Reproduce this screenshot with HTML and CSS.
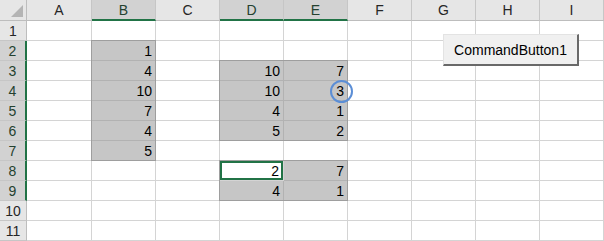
FILE: index.html
```html
<!DOCTYPE html>
<html lang="en">
<head>
    <meta charset="UTF-8">
    <title>Sheet1</title>
    <link rel="stylesheet" href="styles.css">
</head>
<body>
    <div class="sheet">
        <div class="grid">
            <!-- column headers -->
            <div class="corner">
                <svg width="12" height="12" viewBox="0 0 12 12"><polygon points="12,0 12,12 0,12" fill="#b4b4b4"/></svg>
            </div>
            <div class="hd">A</div>
            <div class="hd sel">B</div>
            <div class="hd">C</div>
            <div class="hd sel">D</div>
            <div class="hd sel">E</div>
            <div class="hd">F</div>
            <div class="hd">G</div>
            <div class="hd">H</div>
            <div class="hd">I</div>

            <!-- row 1 -->
            <div class="rh">1</div>
            <div class="c"></div><div class="c"></div><div class="c"></div><div class="c"></div><div class="c"></div><div class="c"></div><div class="c"></div><div class="c"></div><div class="c"></div>

            <!-- row 2 -->
            <div class="rh sel">2</div>
            <div class="c"></div><div class="c s">1</div><div class="c"></div><div class="c"></div><div class="c"></div><div class="c"></div><div class="c"></div><div class="c"></div><div class="c"></div>

            <!-- row 3 -->
            <div class="rh sel">3</div>
            <div class="c"></div><div class="c s">4</div><div class="c"></div><div class="c s">10</div><div class="c s">7</div><div class="c"></div><div class="c"></div><div class="c"></div><div class="c"></div>

            <!-- row 4 -->
            <div class="rh sel">4</div>
            <div class="c"></div><div class="c s">10</div><div class="c"></div><div class="c s">10</div><div class="c s">3</div><div class="c"></div><div class="c"></div><div class="c"></div><div class="c"></div>

            <!-- row 5 -->
            <div class="rh sel">5</div>
            <div class="c"></div><div class="c s">7</div><div class="c"></div><div class="c s">4</div><div class="c s">1</div><div class="c"></div><div class="c"></div><div class="c"></div><div class="c"></div>

            <!-- row 6 -->
            <div class="rh sel">6</div>
            <div class="c"></div><div class="c s">4</div><div class="c"></div><div class="c s">5</div><div class="c s">2</div><div class="c"></div><div class="c"></div><div class="c"></div><div class="c"></div>

            <!-- row 7 -->
            <div class="rh sel">7</div>
            <div class="c"></div><div class="c s">5</div><div class="c"></div><div class="c"></div><div class="c"></div><div class="c"></div><div class="c"></div><div class="c"></div><div class="c"></div>

            <!-- row 8 -->
            <div class="rh sel">8</div>
            <div class="c"></div><div class="c"></div><div class="c"></div><div class="c active">2</div><div class="c s">7</div><div class="c"></div><div class="c"></div><div class="c"></div><div class="c"></div>

            <!-- row 9 -->
            <div class="rh sel">9</div>
            <div class="c"></div><div class="c"></div><div class="c"></div><div class="c s">4</div><div class="c s">1</div><div class="c"></div><div class="c"></div><div class="c"></div><div class="c"></div>

            <!-- row 10 -->
            <div class="rh">10</div>
            <div class="c"></div><div class="c"></div><div class="c"></div><div class="c"></div><div class="c"></div><div class="c"></div><div class="c"></div><div class="c"></div><div class="c"></div>

            <!-- row 11 -->
            <div class="rh">11</div>
            <div class="c"></div><div class="c"></div><div class="c"></div><div class="c"></div><div class="c"></div><div class="c"></div><div class="c"></div><div class="c"></div><div class="c"></div>
        </div>

        <!-- selection outlines, drawn over the grid -->
        <div class="range range-b"></div>
        <div class="range range-de"></div>
        <div class="range range-de2"></div>
        <div class="active-box"></div>
        <div class="circle"></div>

        <button class="cmd">CommandButton1</button>
    </div>
</body>
</html>
```

FILE: styles.css
```css
body {
    margin: 0;
    background: #ffffff;
    font-family: 'Liberation Sans', Arial, sans-serif;
    color: #000;
}

.sheet {
    position: relative;
    width: 604px;
    height: 241px;
    overflow: hidden;
}

.grid {
    display: grid;
    grid-template-columns: 27px 65px repeat(8, 64px);
    grid-template-rows: 21px repeat(11, 20px);
}

.grid > div {
    box-sizing: border-box;
}

.corner {
    background: #e6e6e6;
    border-right: 1px solid #bdbdbd;
    border-bottom: 1px solid #bdbdbd;
    display: flex;
    align-items: flex-end;
    justify-content: flex-end;
    padding: 0 3px 3px 0;
}

.corner svg {
    display: block;
}

.hd {
    background: #e6e6e6;
    border-right: 1px solid #c6c6c6;
    border-bottom: 1px solid #bdbdbd;
    text-align: center;
    font-size: 14px;
    line-height: 20px;
    color: #262626;
}

.hd.sel {
    background: #d2d2d2;
    color: #24412f;
    border-bottom: 2px solid #217346;
}

.rh {
    background: #e6e6e6;
    border-right: 1px solid #bdbdbd;
    border-bottom: 1px solid #c6c6c6;
    text-align: center;
    font-size: 14px;
    line-height: 20px;
    color: #262626;
}

.rh.sel {
    background: #d2d2d2;
    color: #24412f;
    border-right: 2px solid #217346;
}

.c {
    border-right: 1px solid #d4d4d4;
    border-bottom: 1px solid #d4d4d4;
    text-align: right;
    font-size: 14px;
    line-height: 20px;
    padding-right: 3px;
    color: #000;
}

.c.s {
    background: #c6c6c6;
    border-right-color: #b2b2b2;
    border-bottom-color: #b2b2b2;
}

.c.active {
    background: #ffffff;
    padding-right: 4px;
}

.range {
    position: absolute;
    border: 1px solid #9e9e9e;
    box-sizing: border-box;
}

.range-b {
    left: 91px;
    top: 40px;
    width: 65px;
    height: 121px;
}

.range-de {
    left: 219px;
    top: 60px;
    width: 129px;
    height: 81px;
}

.range-de2 {
    left: 219px;
    top: 160px;
    width: 129px;
    height: 41px;
}

.active-box {
    position: absolute;
    left: 220px;
    top: 161px;
    width: 63px;
    height: 19px;
    border: 2px solid #217346;
    box-sizing: border-box;
}

.circle {
    position: absolute;
    left: 330px;
    top: 80px;
    width: 23px;
    height: 23px;
    border: 2px solid #5b8ed6;
    border-radius: 50%;
    box-sizing: border-box;
}

.cmd {
    position: absolute;
    left: 443px;
    top: 34px;
    width: 136px;
    height: 32px;
    margin: 0;
    padding: 0;
    background: #f0f0f0;
    border-top: 1px solid #e3e3e3;
    border-left: 1px solid #e3e3e3;
    border-right: 2px solid #696969;
    border-bottom: 2px solid #696969;
    font-family: 'Liberation Sans', Arial, sans-serif;
    font-size: 14px;
    color: #000;
}
```
